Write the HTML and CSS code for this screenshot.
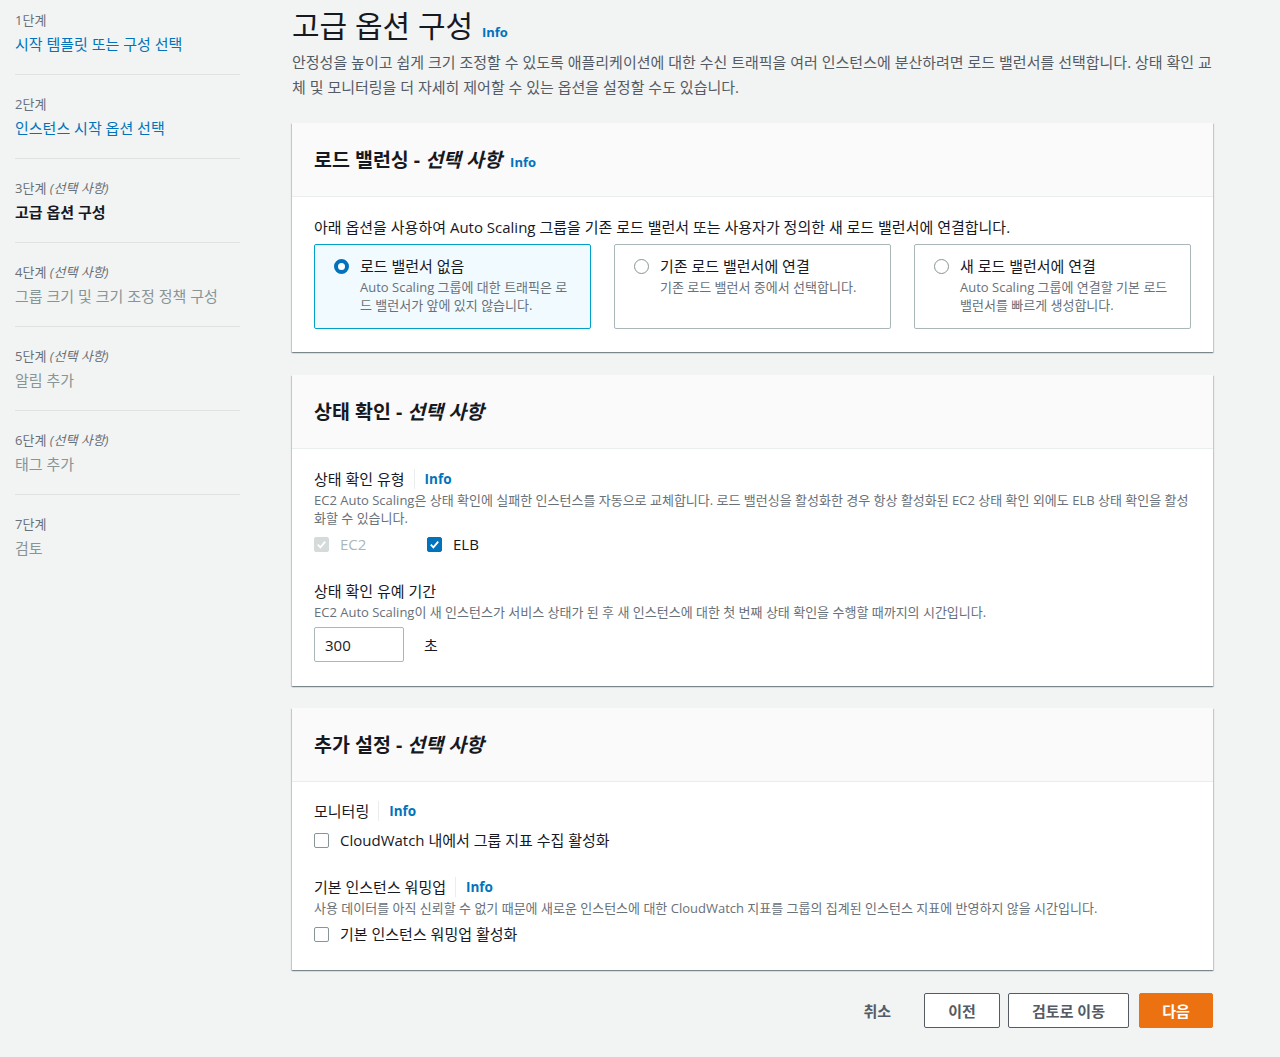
FILE: index.html
```html
<!DOCTYPE html>
<html lang="ko">
<head>
  <meta charset="UTF-8" />
  <meta name="viewport" content="width=device-width, initial-scale=1.0"/>
  <title>고급 옵션 구성</title>
  <link rel="stylesheet" href="styles.css">
</head>
<body>

<div class="page">
  <!-- Steps -->
  <ul class="steps">
    <li>
      <div class="step-no">1단계</div>
      <a href="#" class="step-link">시작 템플릿 또는 구성 선택</a>
    </li>
    <li>
      <div class="step-no">2단계</div>
      <a href="#" class="step-link">인스턴스 시작 옵션 선택</a>
    </li>
    <li>
      <div class="step-no">3단계 <i>(선택 사항)</i></div>
      <div class="step-current">고급 옵션 구성</div>
    </li>
    <li>
      <div class="step-no">4단계 <i>(선택 사항)</i></div>
      <div class="step-disabled">그룹 크기 및 크기 조정 정책 구성</div>
    </li>
    <li>
      <div class="step-no">5단계 <i>(선택 사항)</i></div>
      <div class="step-disabled">알림 추가</div>
    </li>
    <li>
      <div class="step-no">6단계 <i>(선택 사항)</i></div>
      <div class="step-disabled">태그 추가</div>
    </li>
    <li>
      <div class="step-no">7단계</div>
      <div class="step-disabled">검토</div>
    </li>
  </ul>

  <main class="main">
    <h1 class="page-title">고급 옵션 구성 <a href="#" class="info">Info</a></h1>
    <p class="page-desc">안정성을 높이고 쉽게 크기 조정할 수 있도록 애플리케이션에 대한 수신 트래픽을 여러 인스턴스에 분산하려면 로드 밸런서를 선택합니다. 상태 확인 교체 및 모니터링을 더 자세히 제어할 수 있는 옵션을 설정할 수도 있습니다.</p>

    <!-- Load balancing -->
    <section class="panel">
      <div class="panel-head">
        <h2>로드 밸런싱 - <i>선택 사항</i> <a href="#" class="info">Info</a></h2>
      </div>
      <div class="panel-body">
        <p class="lead">아래 옵션을 사용하여 Auto Scaling 그룹을 기존 로드 밸런서 또는 사용자가 정의한 새 로드 밸런서에 연결합니다.</p>
        <div class="tiles">
          <div class="tile selected">
            <span class="radio checked"></span>
            <div>
              <div class="tile-title">로드 밸런서 없음</div>
              <div class="tile-desc">Auto Scaling 그룹에 대한 트래픽은 로드 밸런서가 앞에 있지 않습니다.</div>
            </div>
          </div>
          <div class="tile">
            <span class="radio"></span>
            <div>
              <div class="tile-title">기존 로드 밸런서에 연결</div>
              <div class="tile-desc">기존 로드 밸런서 중에서 선택합니다.</div>
            </div>
          </div>
          <div class="tile">
            <span class="radio"></span>
            <div>
              <div class="tile-title">새 로드 밸런서에 연결</div>
              <div class="tile-desc">Auto Scaling 그룹에 연결할 기본 로드 밸런서를 빠르게 생성합니다.</div>
            </div>
          </div>
        </div>
      </div>
    </section>

    <!-- Health checks -->
    <section class="panel health">
      <div class="panel-head">
        <h2>상태 확인 - <i>선택 사항</i></h2>
      </div>
      <div class="panel-body">
        <div class="field">
          <div class="label">상태 확인 유형 <span class="sep"></span><a href="#" class="info">Info</a></div>
          <div class="hint">EC2 Auto Scaling은 상태 확인에 실패한 인스턴스를 자동으로 교체합니다. 로드 밸런싱을 활성화한 경우 항상 활성화된 EC2 상태 확인 외에도 ELB 상태 확인을 활성화할 수 있습니다.</div>
          <div class="check-row">
            <label class="check disabled">
              <span class="box on"><svg viewBox="0 0 14 14"><path d="M3 7.2l2.8 2.8L11 4" /></svg></span>EC2
            </label>
            <label class="check">
              <span class="box on blue"><svg viewBox="0 0 14 14"><path d="M3 7.2l2.8 2.8L11 4" /></svg></span>ELB
            </label>
          </div>
        </div>
        <div class="field">
          <div class="label">상태 확인 유예 기간</div>
          <div class="hint">EC2 Auto Scaling이 새 인스턴스가 서비스 상태가 된 후 새 인스턴스에 대한 첫 번째 상태 확인을 수행할 때까지의 시간입니다.</div>
          <div class="input-row">
            <input type="text" class="num" value="300" />
            <span>초</span>
          </div>
        </div>
      </div>
    </section>

    <!-- Additional settings -->
    <section class="panel last">
      <div class="panel-head">
        <h2>추가 설정 - <i>선택 사항</i></h2>
      </div>
      <div class="panel-body">
        <div class="field">
          <div class="label">모니터링 <span class="sep"></span><a href="#" class="info">Info</a></div>
          <label class="check first">
            <span class="box"></span>CloudWatch 내에서 그룹 지표 수집 활성화
          </label>
        </div>
        <div class="field">
          <div class="label">기본 인스턴스 워밍업 <span class="sep"></span><a href="#" class="info">Info</a></div>
          <div class="hint">사용 데이터를 아직 신뢰할 수 없기 때문에 새로운 인스턴스에 대한 CloudWatch 지표를 그룹의 집계된 인스턴스 지표에 반영하지 않을 시간입니다.</div>
          <label class="check">
            <span class="box"></span>기본 인스턴스 워밍업 활성화
          </label>
        </div>
      </div>
    </section>

    <div class="actions">
      <button class="btn link">취소</button>
      <button class="btn prev">이전</button>
      <button class="btn review">검토로 이동</button>
      <button class="btn primary">다음</button>
    </div>
  </main>
</div>

</body>
</html>
```

FILE: styles.css
```css
* { box-sizing: border-box; }
body {
  margin: 0;
  font-family: "Open Sans", "Noto Sans CJK KR", sans-serif;
  font-size: 15px;
  color: #16191f;
  background-color: #f2f3f3;
}

a { text-decoration: none; }

.page {
  display: flex;
  align-items: flex-start;
}

/* steps */
.steps {
  list-style: none;
  margin: 0 0 0 15px;
  padding: 0;
  width: 225px;
  flex: none;
}

.steps li {
  padding: 20px 0;
  border-bottom: 1px solid #dfe2e2;
}

.steps li:first-child { padding-top: 11px; }
.steps li:last-child { border-bottom: none; }

.step-no {
  font-size: 13px;
  line-height: 18px;
  color: #687078;
  margin-bottom: 5px;
}

.step-link, .step-current, .step-disabled {
  display: block;
  font-size: 15px;
  line-height: 20px;
}

.step-link { color: #0073bb; }
.step-current { font-weight: bold; color: #16191f; }
.step-disabled { color: #879596; }

/* main */
.main {
  width: 921px;
  margin-left: 52px;
  padding-top: 8px;
}

.page-title {
  margin: 0;
  font-size: 30px;
  line-height: 36px;
  height: 36px;
  font-weight: normal;
  color: #16191f;
}

.info {
  color: #0073bb;
  font-size: 13px;
  font-weight: bold;
  line-height: 1;
  margin-left: 1px;
}

.page-desc {
  margin: 6px 0 23px;
  color: #545b64;
  line-height: 25px;
}

/* panels */
.panel {
  background: white;
  margin-bottom: 23px;
  box-shadow: 0 1px 1px 0 rgba(0,28,36,0.3), 1px 1px 1px 0 rgba(0,28,36,0.15), -1px 1px 1px 0 rgba(0,28,36,0.15);
}

.panel.health { margin-bottom: 22px; }

.panel-head {
  background: #fafafa;
  height: 74px;
  padding: 0 22px;
  display: flex;
  align-items: center;
  border-bottom: 1px solid #eaeded;
}

.panel-head h2 {
  margin: 0;
  font-size: 19.5px;
  font-weight: bold;
  line-height: 24px;
}

.panel-head .info { margin-left: 3px; }

.panel-body {
  padding: 20px 22px 23px;
}

.panel.health .panel-body { padding-bottom: 24px; }
.panel.last .panel-body { padding: 19px 22px 26px; }

.lead {
  margin: 0 0 7px;
  line-height: 20px;
}

.tiles {
  display: grid;
  grid-template-columns: repeat(3, 1fr);
  gap: 23px;
}

.tile {
  display: flex;
  gap: 11px;
  border: 1px solid #aab7b8;
  border-radius: 2px;
  padding: 11px 18px 14px 19px;
  min-height: 85px;
}

.tile.selected {
  background: #f1faff;
  border-color: #00a1c9;
}

.tile-title {
  line-height: 20px;
  margin-bottom: 2px;
}

.tile-desc {
  font-size: 13px;
  line-height: 18px;
  color: #687078;
}

.radio {
  flex: none;
  width: 15px;
  height: 15px;
  margin-top: 3px;
  border-radius: 50%;
  border: 1px solid #879596;
  background: white;
}

.radio.checked {
  border: 4px solid #0073bb;
}

/* form fields */
.field + .field { margin-top: 27px; }

.label {
  display: flex;
  align-items: center;
  height: 20px;
  line-height: 20px;
}

.sep {
  display: inline-block;
  width: 1px;
  height: 20px;
  background: #eaeded;
  margin: 0 10px 0 9px;
}

.label .info { font-size: 13.5px; margin: 2px 0 0; }

.hint {
  font-size: 13px;
  line-height: 18px;
  color: #687078;
  margin-top: 2px;
}

.check-row {
  display: flex;
  margin-top: 7px;
}

.check-row .check { width: 113px; margin-top: 0; }

.check {
  display: flex;
  align-items: center;
  gap: 11px;
  height: 20px;
  line-height: 20px;
  margin-top: 7px;
}

.check.first { margin-top: 9px; }
.check.disabled { color: #aab7b8; }

.box {
  flex: none;
  width: 15px;
  height: 15px;
  border: 1px solid #879596;
  border-radius: 2px;
  background: white;
  display: flex;
  align-items: center;
  justify-content: center;
}

.box.on {
  border-color: #d5dbdb;
  background: #d5dbdb;
}

.box.on.blue {
  border-color: #0073bb;
  background: #0073bb;
}

.box svg {
  width: 13px;
  height: 13px;
  fill: none;
  stroke: white;
  stroke-width: 2;
}

.input-row {
  display: flex;
  align-items: center;
  gap: 20px;
  margin-top: 6px;
}

.num {
  width: 90px;
  height: 35px;
  padding: 4px 10px;
  border: 1px solid #aab7b8;
  border-radius: 2px;
  font: inherit;
  color: #16191f;
}

/* buttons */
.actions {
  display: flex;
  justify-content: flex-end;
  gap: 8px;
}

.btn {
  height: 35px;
  padding: 0 20px;
  font: inherit;
  font-weight: bold;
  color: #545b64;
  background: white;
  border: 1px solid #545b64;
  border-radius: 2px;
}

.btn.prev { width: 76px; }
.btn.review { width: 121px; margin-right: 2px; }

.btn.link {
  border-color: transparent;
  background: transparent;
  margin-right: 4px;
}

.btn.primary {
  width: 74px;
  background: #ec7211;
  border-color: #ec7211;
  color: white;
}
```
